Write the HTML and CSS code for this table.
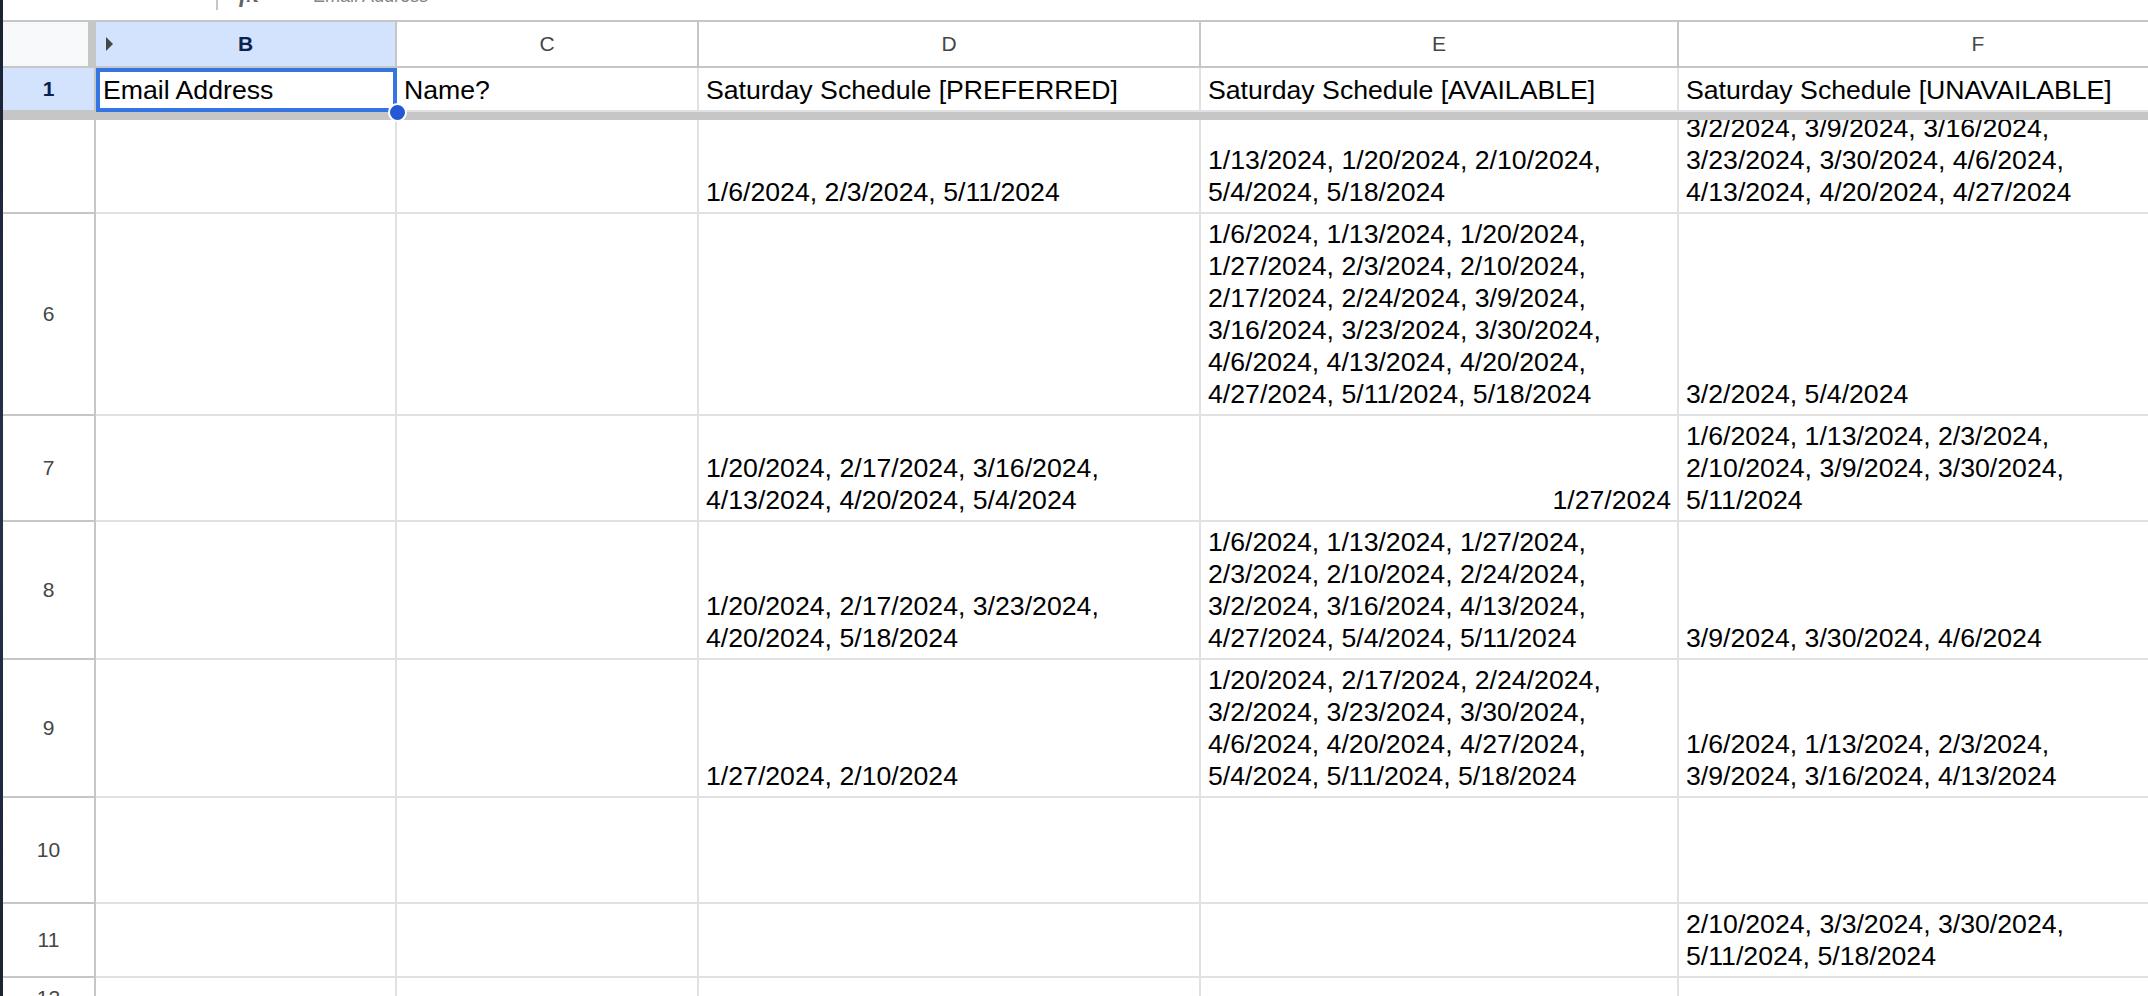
FILE: index.html
```html
<!DOCTYPE html>
<html>
<head>
<meta charset="utf-8">
<title>Sheet</title>
<link rel="stylesheet" href="styles.css">
</head>
<body>
<div class="app">
  <div class="edge"></div>
  <div class="sheet">
    <div class="fbar">
      <span class="fsep"></span>
      <span class="fx">fx</span>
      <span class="fval">Email Address</span>
    </div>
    <div class="grid head">
      <div class="corner"></div>
      <div class="ch sel-h"><span class="arrow"></span>B</div>
      <div class="ch">C</div>
      <div class="ch">D</div>
      <div class="ch">E</div>
      <div class="ch">F</div>
      <div class="rh sel-h">1</div>
      <div class="c active"><span>Email Address</span><i class="handle"></i></div>
      <div class="c">Name?</div>
      <div class="c">Saturday Schedule [PREFERRED]</div>
      <div class="c">Saturday Schedule [AVAILABLE]</div>
      <div class="c">Saturday Schedule [UNAVAILABLE]</div>
    </div>
    <div class="freeze"></div>
    <div class="viewport">
      <div class="grid body">
        <div class="rh"></div>
        <div class="c"></div>
        <div class="c"></div>
        <div class="c"><span>1/6/2024, 2/3/2024, 5/11/2024</span></div>
        <div class="c"><span>1/13/2024, 1/20/2024, 2/10/2024,</span><span>5/4/2024, 5/18/2024</span></div>
        <div class="c"><span>3/2/2024, 3/9/2024, 3/16/2024,</span><span>3/23/2024, 3/30/2024, 4/6/2024,</span><span>4/13/2024, 4/20/2024, 4/27/2024</span></div>

        <div class="rh">6</div>
        <div class="c"></div>
        <div class="c"></div>
        <div class="c"></div>
        <div class="c"><span>1/6/2024, 1/13/2024, 1/20/2024,</span><span>1/27/2024, 2/3/2024, 2/10/2024,</span><span>2/17/2024, 2/24/2024, 3/9/2024,</span><span>3/16/2024, 3/23/2024, 3/30/2024,</span><span>4/6/2024, 4/13/2024, 4/20/2024,</span><span>4/27/2024, 5/11/2024, 5/18/2024</span></div>
        <div class="c"><span>3/2/2024, 5/4/2024</span></div>

        <div class="rh">7</div>
        <div class="c"></div>
        <div class="c"></div>
        <div class="c"><span>1/20/2024, 2/17/2024, 3/16/2024,</span><span>4/13/2024, 4/20/2024, 5/4/2024</span></div>
        <div class="c num"><span>1/27/2024</span></div>
        <div class="c"><span>1/6/2024, 1/13/2024, 2/3/2024,</span><span>2/10/2024, 3/9/2024, 3/30/2024,</span><span>5/11/2024</span></div>

        <div class="rh">8</div>
        <div class="c"></div>
        <div class="c"></div>
        <div class="c"><span>1/20/2024, 2/17/2024, 3/23/2024,</span><span>4/20/2024, 5/18/2024</span></div>
        <div class="c"><span>1/6/2024, 1/13/2024, 1/27/2024,</span><span>2/3/2024, 2/10/2024, 2/24/2024,</span><span>3/2/2024, 3/16/2024, 4/13/2024,</span><span>4/27/2024, 5/4/2024, 5/11/2024</span></div>
        <div class="c"><span>3/9/2024, 3/30/2024, 4/6/2024</span></div>

        <div class="rh">9</div>
        <div class="c"></div>
        <div class="c"></div>
        <div class="c"><span>1/27/2024, 2/10/2024</span></div>
        <div class="c"><span>1/20/2024, 2/17/2024, 2/24/2024,</span><span>3/2/2024, 3/23/2024, 3/30/2024,</span><span>4/6/2024, 4/20/2024, 4/27/2024,</span><span>5/4/2024, 5/11/2024, 5/18/2024</span></div>
        <div class="c"><span>1/6/2024, 1/13/2024, 2/3/2024,</span><span>3/9/2024, 3/16/2024, 4/13/2024</span></div>

        <div class="rh">10</div>
        <div class="c"></div>
        <div class="c"></div>
        <div class="c"></div>
        <div class="c"></div>
        <div class="c"></div>

        <div class="rh">11</div>
        <div class="c"></div>
        <div class="c"></div>
        <div class="c"></div>
        <div class="c"></div>
        <div class="c"><span>2/10/2024, 3/3/2024, 3/30/2024,</span><span>5/11/2024, 5/18/2024</span></div>

        <div class="rh">12</div>
        <div class="c"></div>
        <div class="c"></div>
        <div class="c"></div>
        <div class="c"></div>
        <div class="c"></div>
      </div>
    </div>
  </div>
</div>
</body>
</html>
```

FILE: styles.css
```css
* { box-sizing: border-box; margin: 0; padding: 0; }
html, body { margin: 0; background: #ffffff; overflow: hidden; }
body { font-family: "Liberation Sans", Arial, sans-serif; }

.app { display: flex; width: 2148px; height: 996px; }
.edge { flex: none; width: 3px; background: linear-gradient(#1a2233, #24324a 50%, #1b2436); }
.sheet { flex: 1; min-width: 0; display: flex; flex-direction: column; overflow: hidden; }

.fbar { flex: none; height: 22px; display: flex; align-items: flex-start; border-bottom: 2px solid #c4c7c5; overflow: hidden; background: #fff; }
.fsep { flex: none; width: 2px; height: 10px; margin-left: 213px; background: #c4c7c5; }
.fx { flex: none; margin-left: 21px; margin-top: -16px; font: italic bold 24px/20px "Liberation Serif", serif; color: #5f6368; }
.fval { flex: none; margin-left: 54px; margin-top: -14px; font-size: 18px; line-height: 20px; color: #80868b; }

.grid { display: grid; grid-template-columns: 93px 301px 302px 502px 478px 600px; }
.head { flex: none; grid-template-rows: 46px 44px; }

.corner { background: #f8f9fa; border-right: 8px solid #c4c7c5; border-bottom: 2px solid #c4c7c5; }

.ch { position: relative; display: flex; align-items: center; justify-content: center; border-right: 2px solid #c4c7c5; border-bottom: 2px solid #c4c7c5; font-size: 21px; color: #444746; background: #fff; }
.rh { display: flex; align-items: center; justify-content: center; border-right: 2px solid #c4c7c5; border-bottom: 2px solid #c4c7c5; font-size: 21px; color: #444746; background: #fff; }
.sel-h { background: #d3e3fd; color: #0b2150; font-weight: bold; }
.ch.sel-h, .rh.sel-h { background: #d3e3fd; }

.arrow { position: absolute; left: 10px; top: 50%; margin-top: -7px; width: 0; height: 0; border-left: 7px solid #444746; border-top: 7px solid transparent; border-bottom: 7px solid transparent; }

.c { display: flex; flex-direction: column; justify-content: flex-end; align-items: flex-start; padding: 0 6px 4px 7px; border-right: 2px solid #e1e1e1; border-bottom: 2px solid #e1e1e1; font-size: 26.67px; line-height: 32px; color: #000; white-space: nowrap; overflow: hidden; }
.c.num { align-items: flex-end; }

.c.active { position: relative; overflow: visible; }
.c.active::after { content: ""; position: absolute; left: 0; top: 0; right: -2px; bottom: -2px; border: 4px solid #3574e3; }
.handle { position: absolute; right: -12px; bottom: -12px; z-index: 5; width: 19px; height: 19px; border-radius: 50%; background: #2458d6; border: 2.5px solid #fff; }

.freeze { flex: none; height: 8px; background: #c6c6c6; }

.viewport { flex: 1; overflow: hidden; }
.body { grid-template-rows: 106px 202px 106px 138px 138px 106px 74px 42px; margin-top: -12px; }
```
